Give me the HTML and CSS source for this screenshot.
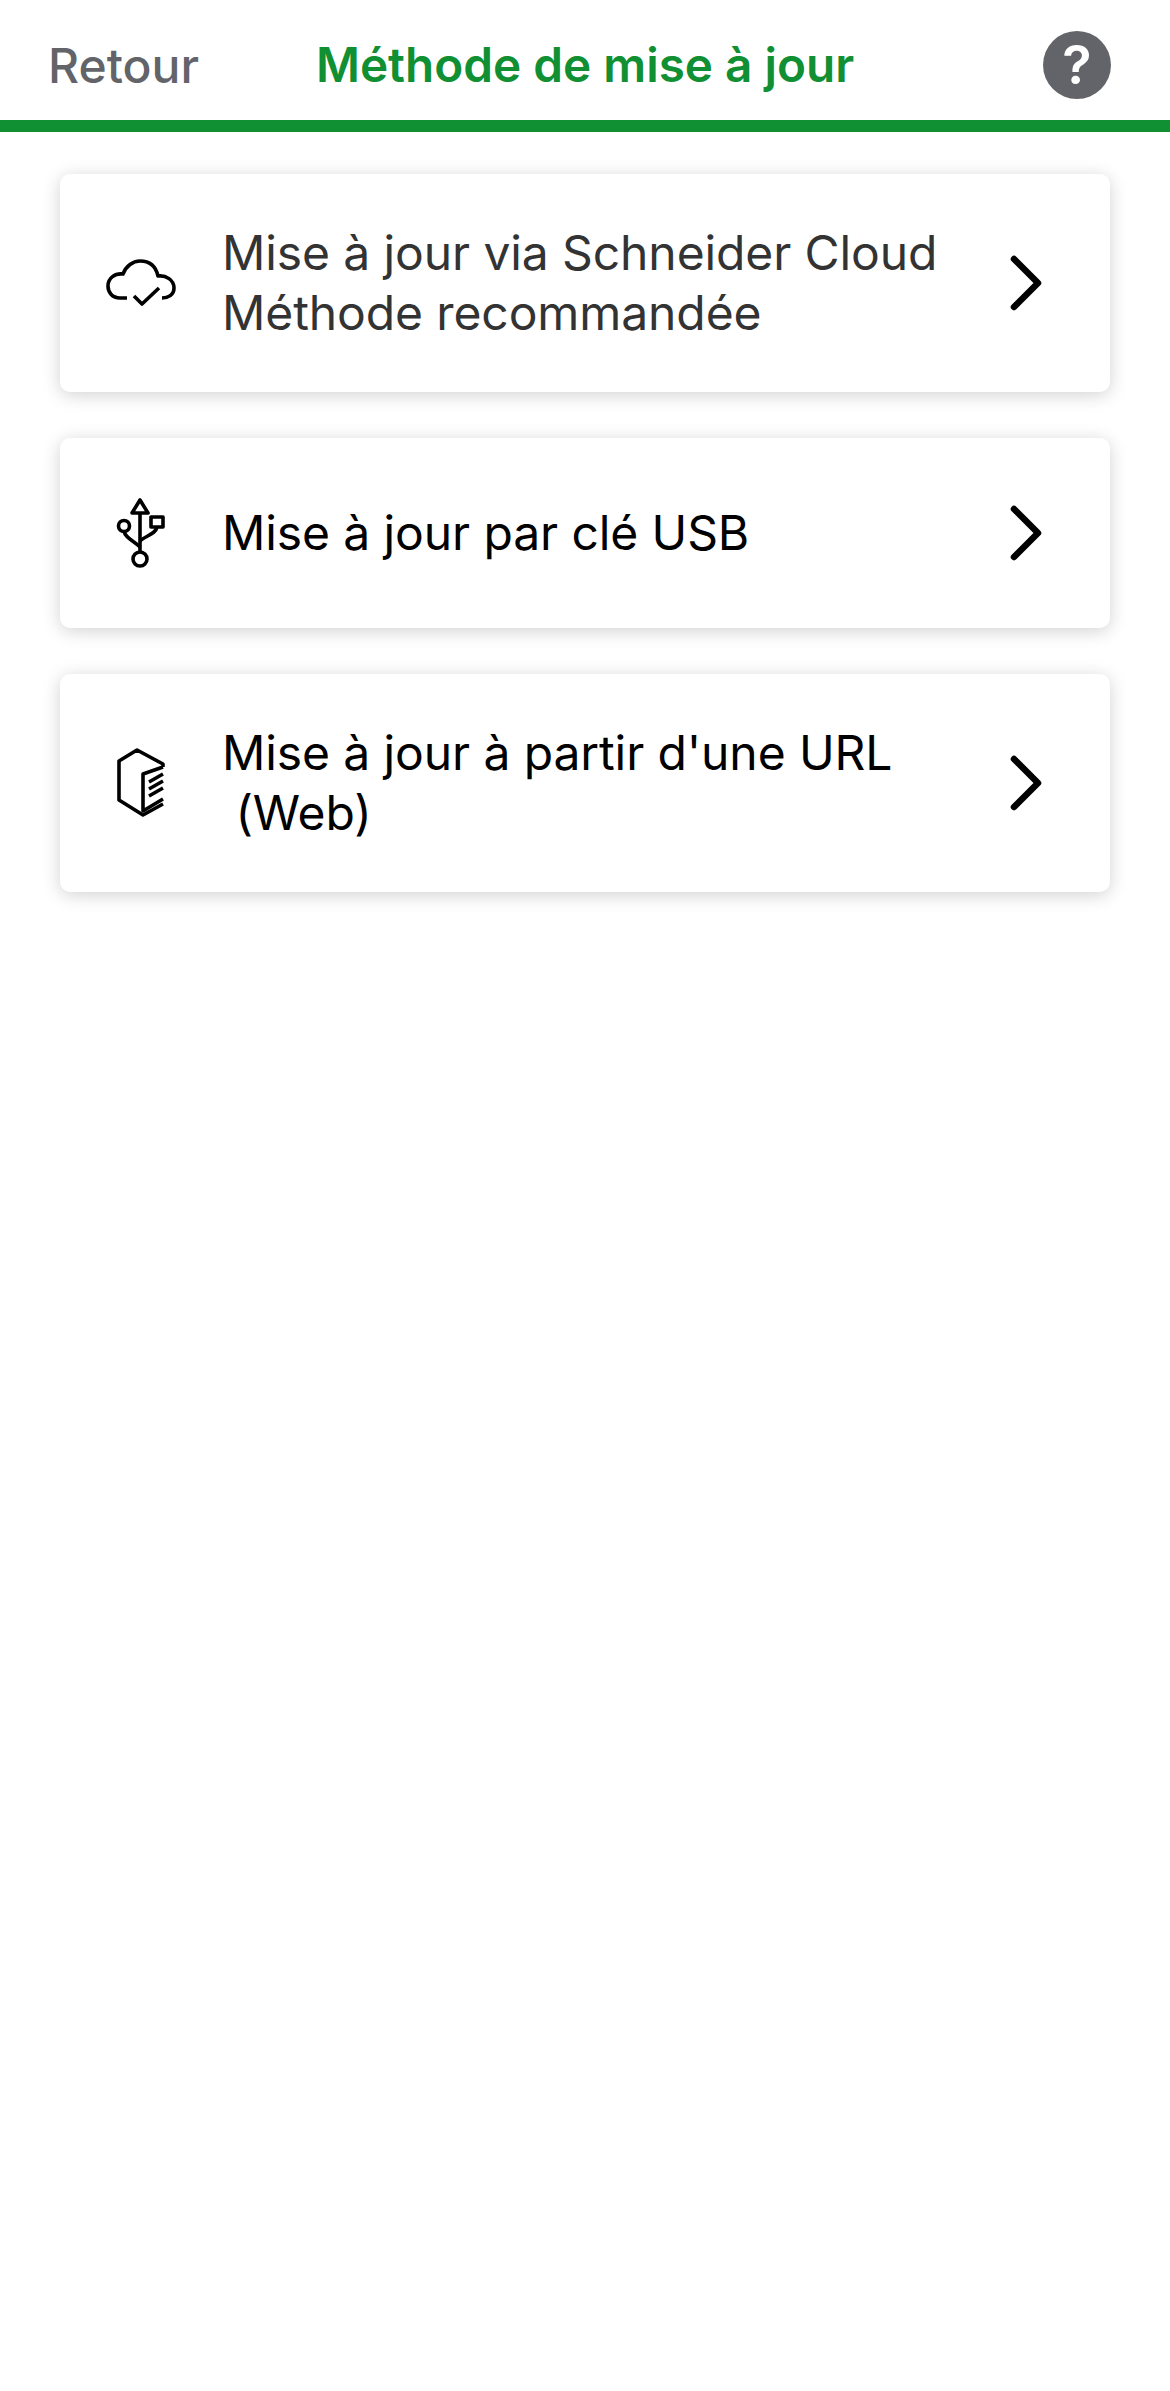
FILE: index.html
```html
<!DOCTYPE html>
<html>
<head>
  <title>Méthode de mise à jour</title>
  <meta name="viewport" content="width=device-width, initial-scale=1.0">
  <link rel="stylesheet" href="styles.css">
</head>
<body>
  <div class="app-bar">
    <span class="back">Retour</span>
    <h1>Méthode de mise à jour</h1>
    <span class="help">?</span>
  </div>
  <div class="main-content">
    <div class="card card-tall card-muted">
      <svg class="icon" viewBox="0 0 120 110">
        <path d="M37 70H30C22 70 18 64 18 58C18 50 25 45 33 46C36 38 43 33 50 33C60 33 66 39 68 48C76 47 84 52 84 60C84 67 78 70 72 70"/>
        <path d="M44 68L52 76L69 60"/>
      </svg>
      <div class="label">Mise à jour via Schneider Cloud<br>Méthode recommandée</div>
      <svg class="chevron" viewBox="0 0 40 60"><path d="M6 6L30 30L6 54"/></svg>
    </div>
    <div class="card">
      <svg class="icon" viewBox="0 0 120 110">
        <path d="M50 22L58 35H42Z"/>
        <path d="M50 35V74"/>
        <circle cx="50" cy="81" r="7"/>
        <circle cx="34" cy="48" r="5.5"/>
        <path d="M34 53C35 60 44 63 50 69"/>
        <rect x="61" y="39" width="12" height="10"/>
        <path d="M67 49C66 56 55 58 50 63"/>
      </svg>
      <div class="label">Mise à jour par clé USB</div>
      <svg class="chevron" viewBox="0 0 40 60"><path d="M6 6L30 30L6 54"/></svg>
    </div>
    <div class="card card-tall">
      <svg class="icon" viewBox="0 0 120 110">
        <path d="M73 39V36L47 22L29 33V72L53 87L73 76"/>
        <path d="M73 39L53 46V83L73 71"/>
        <path d="M59 54L73 46M59 61L73 53M59 68L73 60"/>
      </svg>
      <div class="label">Mise à jour à partir d'une URL<br>&nbsp;(Web)</div>
      <svg class="chevron" viewBox="0 0 40 60"><path d="M6 6L30 30L6 54"/></svg>
    </div>
  </div>
</body>
</html>
```
FILE: styles.css
```css
body {
  font-family: 'Inter', 'Liberation Sans', sans-serif;
  margin: 0;
  min-height: 100vh;
  background-color: #fff;
  color: #000;
}

.app-bar {
  display: flex;
  align-items: center;
  height: 110px;
  padding: 10px 59px 0 48px;
  background-color: #fff;
  border-bottom: 12px solid #118f33;
  font-size: 48px;
}

.app-bar h1 {
  margin: 0 0 0 117px;
  font-size: 47.7px;
  font-weight: 600;
  color: #118f33;
}

.back {
  color: #636469;
  font-weight: 500;
}

.help {
  width: 68px;
  height: 68px;
  margin-left: auto;
  border-radius: 50%;
  background-color: #636469;
  color: #fff;
  font-size: 54px;
  font-weight: 600;
  line-height: 68px;
  text-align: center;
}

.main-content {
  display: flex;
  flex-direction: column;
  gap: 46px;
  padding: 42px 60px 40px;
}

.card {
  display: flex;
  align-items: center;
  height: 190px;
  padding-left: 30px;
  background-color: #fff;
  border-radius: 10px;
  box-shadow: 0 3px 18px rgba(0,0,0,0.18);
}

.card-tall {
  height: 218px;
}

.card-muted .label {
  color: #333;
}

.icon {
  flex: none;
  width: 120px;
  height: 110px;
  fill: none;
  stroke: #000;
  stroke-width: 3.6;
  stroke-linejoin: round;
}

.label {
  flex: 1;
  margin-left: 12px;
  font-size: 48px;
  letter-spacing: -0.1px;
  line-height: 60px;
}

.chevron {
  flex: none;
  width: 40px;
  height: 60px;
  margin-right: 62px;
  fill: none;
  stroke: #000;
  stroke-width: 6.5;
  stroke-linecap: round;
  stroke-linejoin: round;
}
```
